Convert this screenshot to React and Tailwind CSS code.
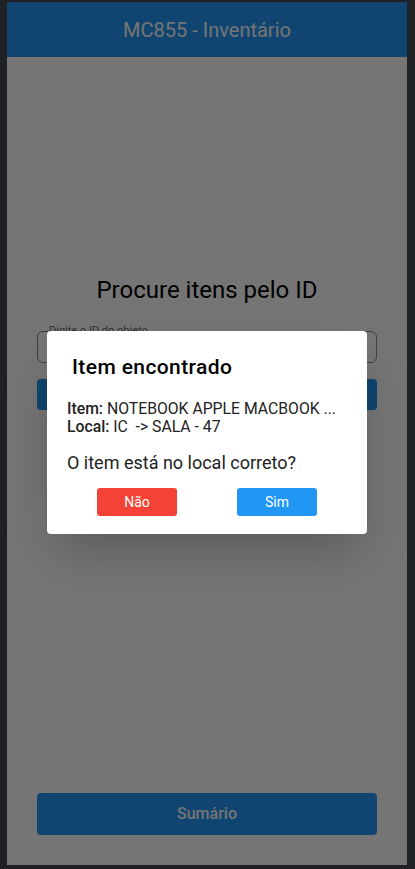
export default function App() {
  return (
    <div
      className="w-[415px] h-[869px] bg-[#202124] pl-[7px] pr-[8px] pt-[2px] pb-[4px] overflow-hidden"
      style={{ fontFamily: 'Roboto, "Liberation Sans", sans-serif' }}
    >
      <div className="relative h-full w-full bg-white flex flex-col">
        {/* Header */}
        <header className="h-[55px] shrink-0 bg-[#2196f3] flex items-center justify-center">
          <h1 className="text-[20px] text-white">MC855 - Inventário</h1>
        </header>

        {/* Page */}
        <main className="flex-1 flex flex-col px-[30px]">
          <h2 className="mt-[218px] text-center text-[24px] text-black leading-[30px]">Procure itens pelo ID</h2>
          <div className="relative mt-[26px] h-[32px] rounded-[6px] border border-[#8a8a8a]">
            <span className="absolute -top-[9px] left-[10px] text-[11px] bg-white px-[1px] text-[#666]">
              Digite o ID do objeto
            </span>
          </div>
          <button className="mt-[16px] h-[31px] rounded-[4px] bg-[#2196f3]" />
          <div className="flex-1" />
          <button className="mb-[30px] h-[42px] rounded-[4px] bg-[#2196f3] text-white text-[16px] font-medium">
            Sumário
          </button>
        </main>

        {/* Overlay */}
        <div className="absolute inset-0 bg-black/[0.54]" />

        {/* Dialog */}
        <div className="absolute left-[40px] top-[329px] w-[320px] h-[203px] rounded-[4px] bg-white shadow-2xl px-5 pt-[22px]">
          <h3 className="pl-[5px] text-[21px] font-medium tracking-[0.4px] text-black leading-[28px]">Item encontrado</h3>
          <div className="mt-[19px] text-[15.75px] leading-[18px] text-[#222]">
            <p className="truncate">
              <span className="font-medium">Item:</span> NOTEBOOK APPLE MACBOOK ...
            </p>
            <p className="whitespace-pre">
              <span className="font-medium">Local:</span> IC  -&gt; SALA - 47
            </p>
          </div>
          <p className="mt-[15px] text-[18px] leading-[24px] text-[#222]">O item está no local correto?</p>
          <div className="mt-[13px] flex justify-around">
            <button className="w-[80px] h-[28px] rounded-[3px] bg-[#f44336] text-white text-[14px]">Não</button>
            <button className="w-[80px] h-[28px] rounded-[3px] bg-[#2196f3] text-white text-[14px]">Sim</button>
          </div>
        </div>
      </div>
    </div>
  );
}
